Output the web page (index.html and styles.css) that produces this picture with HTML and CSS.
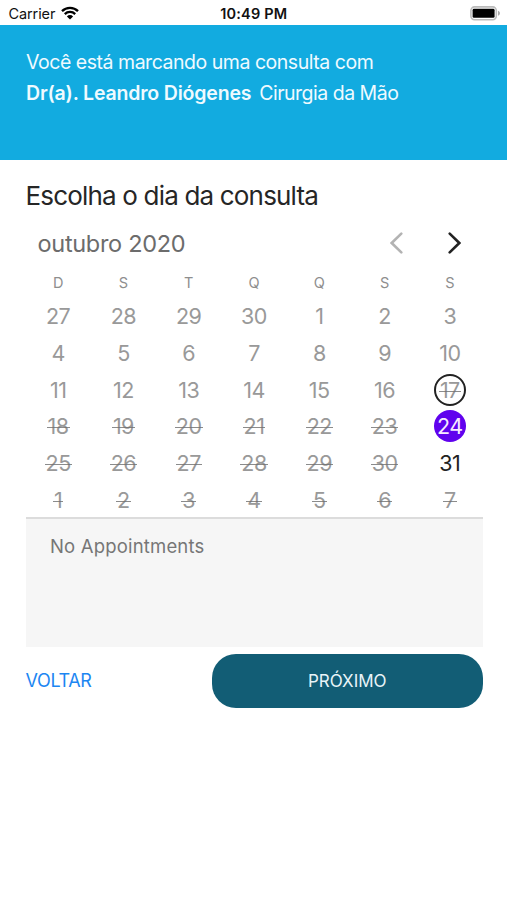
FILE: index.html
```html
<!DOCTYPE html>
<html lang="pt-BR">
<head>
<meta charset="utf-8">
<title>Marcar consulta</title>
<link rel="stylesheet" href="styles.css">
</head>
<body>
<div class="status">
  <div class="carrier"><span>Carrier</span>
    <svg class="wifi" width="18" height="14" viewBox="0 0 18 14"><path d="M9 13.6 5.9 10.4a4.4 4.4 0 0 1 6.2 0z"/><path class="arc" d="M3.8 8.1a7.4 7.4 0 0 1 10.4 0M1 5.1a11.3 11.3 0 0 1 16 0"/></svg>
  </div>
  <span class="clock">10:49 PM</span>
  <svg class="battery" width="31" height="15" viewBox="0 0 31 15"><rect class="shell" x=".9" y=".9" width="25.4" height="12.8" rx="3.6"/><rect x="2.6" y="2.8" width="22" height="9" rx="1.4"/><path class="tip" d="M28 4.8c2.6.8 2.6 4.2 0 5z"/></svg>
</div>
<header class="banner">
  <p class="intro">Você está marcando uma consulta com</p>
  <p class="who"><strong>Dr(a). Leandro Diógenes</strong><span class="specialty">Cirurgia da Mão</span></p>
</header>
<main>
  <h1>Escolha o dia da consulta</h1>
  <div class="month">
    <span class="month-name">outubro 2020</span>
    <svg class="chevron off" width="13" height="22" viewBox="0 0 13 22"><path d="M11.3 1.6 1.7 11l9.6 9.4"/></svg>
    <svg class="chevron" width="13" height="22" viewBox="0 0 13 22"><path d="M1.7 1.6 11.3 11l-9.6 9.4"/></svg>
  </div>
  <div class="weekdays"><span>D</span><span>S</span><span>T</span><span>Q</span><span>Q</span><span>S</span><span>S</span></div>
  <div class="days">
    <span>27</span><span>28</span><span>29</span><span>30</span><span>1</span><span>2</span><span>3</span>
    <span>4</span><span>5</span><span>6</span><span>7</span><span>8</span><span>9</span><span>10</span>
    <span>11</span><span>12</span><span>13</span><span>14</span><span>15</span><span>16</span><span class="today"><s>17</s></span>
    <span><s>18</s></span><span><s>19</s></span><span><s>20</s></span><span><s>21</s></span><span><s>22</s></span><span><s>23</s></span><span class="selected">24</span>
    <span><s>25</s></span><span><s>26</s></span><span><s>27</s></span><span><s>28</s></span><span><s>29</s></span><span><s>30</s></span><span class="open">31</span>
    <span><s>1</s></span><span><s>2</s></span><span><s>3</s></span><span><s>4</s></span><span><s>5</s></span><span><s>6</s></span><span><s>7</s></span>
  </div>
  <section class="appointments"><span class="empty">No Appointments</span></section>
  <div class="actions"><a class="back"><span>VOLTAR</span></a><button class="next"><span>PRÓXIMO</span></button></div>
</main>
</body>
</html>
```
FILE: styles.css
```css
* { box-sizing: border-box; }
body { margin: 0; min-height: 900px; background: #fff; font-family: Inter, "Liberation Sans", sans-serif; color: #222; }
p, h1 { margin: 0; font-weight: 400; white-space: nowrap; }

.status { display: grid; grid-template-columns: 1fr auto 1fr; align-items: center; height: 25px; padding: 2px 8px 0 8.5px; color: #111; }
.carrier { display: flex; align-items: center; gap: 6px; font-size: 14.5px; letter-spacing: -.1px; }
.wifi { margin-top: -2px; }
.wifi .arc { fill: none; stroke: #000; stroke-width: 2.3; }
.clock { font-size: 14.5px; font-weight: 600; letter-spacing: .15px; }
.battery { justify-self: end; margin: -1px -2px 0 0; }
.battery .shell { fill: #fff; stroke: #bbb; stroke-width: 1.6; }
.battery .tip { fill: #aaa; }

.banner { height: 135px; padding: 22px 26px; background: #12abe0; color: #effaff; font-size: 19.5px; line-height: 31px; }
.intro { letter-spacing: -.47px; }
.who { display: flex; gap: 8px; }
.who strong { font-weight: 600; letter-spacing: -.18px; }
.specialty { letter-spacing: -.5px; }

main { padding: 16px 24.5px 0 25.5px; }
h1 { font-size: 26px; line-height: 40px; letter-spacing: -.82px; color: #262626; }
.month { display: flex; align-items: center; height: 54px; padding: 0 22px 0 12px; }
.month-name { flex: 1; font-size: 23.5px; letter-spacing: -.3px; color: #6c6c6c; }
.chevron { fill: none; stroke: #222; stroke-width: 2.6; stroke-linecap: round; }
.chevron + .chevron { margin-left: 45px; }
.chevron.off { stroke: #b3b3b3; }
.weekdays, .days { display: grid; grid-template-columns: repeat(7, 1fr); text-align: center; }
.weekdays { height: 28px; line-height: 26px; font-size: 14.5px; color: #8e8e8e; }
.days { grid-auto-rows: 36.7px; place-items: center; font-size: 21.5px; letter-spacing: -.5px; color: #999; }
.days s { position: relative; text-decoration: none; }
.days s::after { content: ""; position: absolute; left: -1px; right: -1px; top: 14px; height: 1px; background: rgba(110, 110, 110, .8); }
.days .today, .days .selected { display: grid; place-items: center; width: 32px; height: 32px; border-radius: 50%; }
.days .today { border: 2px solid #222; }
.days .selected { background: #6002ee; color: #f6eaff; }
.days .open { color: #222; }

.appointments { height: 130px; margin-top: -1.2px; padding: 12px 24.5px; border-top: 2px solid #dcdcdc; background: #f6f6f6; }
.empty { font-size: 18.5px; line-height: 31px; letter-spacing: .18px; color: #767676; }
.actions { display: flex; align-items: center; justify-content: space-between; margin-top: 7px; }
.back { color: #1c86f2; font-size: 18px; letter-spacing: -.35px; }
.next { width: 270.5px; height: 54px; padding: 0; border: 0; border-radius: 24px; background: #125d75; color: #e8f4f8; font: 400 17px Inter, "Liberation Sans", sans-serif; }
```
